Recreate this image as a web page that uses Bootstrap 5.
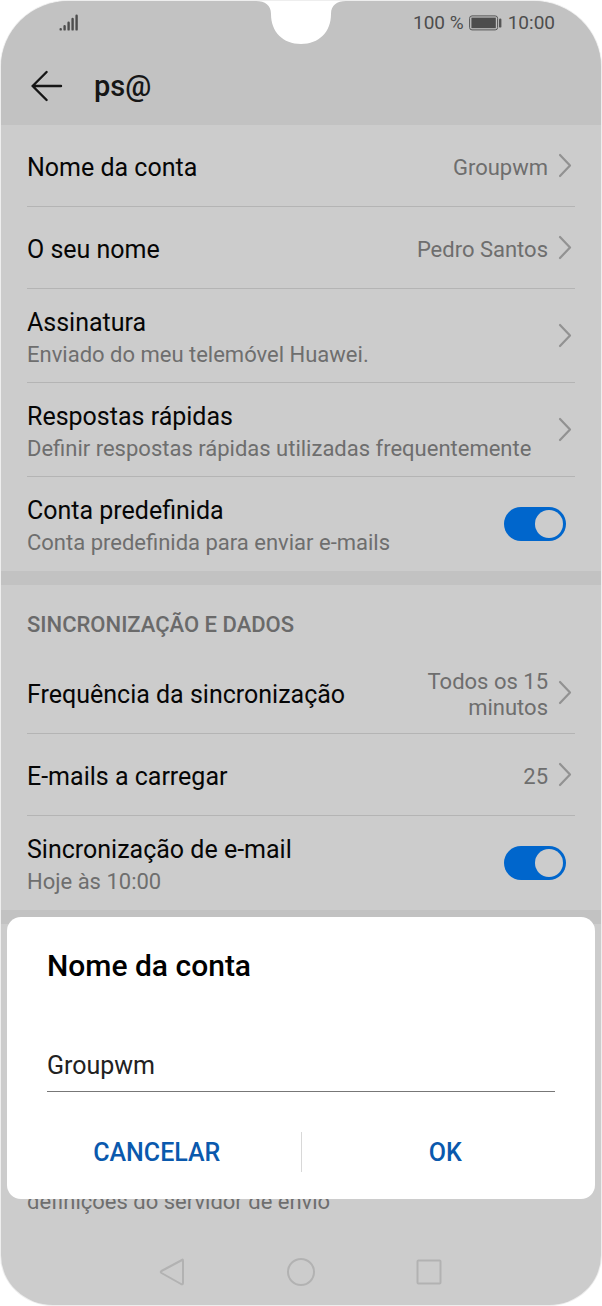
<!DOCTYPE html>
<html lang="pt">
<head>
<meta charset="utf-8">
<meta name="viewport" content="width=device-width, initial-scale=1">
<title>ps@</title>
<link href="https://cdn.jsdelivr.net/npm/bootstrap@5.3.0/dist/css/bootstrap.min.css" rel="stylesheet">
<style>
body { font-family: Roboto, "Liberation Sans", sans-serif; background: #fff; color: #060606; padding: 1px; }
.phone { background: #ccc; border-radius: 68px 68px 52px 52px / 66px 66px 50px 50px; box-shadow: 0 0 0 1px #eee; min-height: calc(100vh - 2px); }
.notch { left: 50%; top: -2px; transform: translateX(-50%); }
.topbar { background: #c2c2c2; color: #161616; }
.status { height: 44px; padding: 0 46px 0 57px; font-size: 19px; line-height: 44px; color: #4d4d4d; }
.heading { height: 80px; padding: 1px 26px 0 29px; }
.heading h1 { font-size: 29px; line-height: 36px; font-weight: 500; padding-left: 6px; }
.settings { padding: 0 26px; }
.entry { min-height: 82px; border-bottom: 1px solid #b4b4b4; color: inherit; text-decoration: none; gap: 9px; padding-right: 2px; }
.entry.tall { min-height: 94px; }
.entry:last-child { border-bottom-color: transparent; }
.entry span.name, .entry .choice, .entry .texts { padding-top: 4px; }
.entry .texts span.name { padding-top: 0; }
.name { font-size: 25px; line-height: 34px; }
.detail, .choice { font-size: 22px; line-height: 30px; color: #6e6e6e; }
.choice { line-height: 26px; text-align: right; max-width: 140px; }
.band { height: 14px; background: #c2c2c2; }
.group-title { font-size: 22px; line-height: 30px; font-weight: 500; color: #6a6a6a; padding: 25px 0 12px; }
.entry .form-check-input { width: 62px; height: 34px; border: 0; margin: 0 7px 0 0; flex-shrink: 0;
  background-color: #06c; background-size: 34px 34px; background-position: right center;
  background-image: url("data:image/svg+xml,%3Csvg xmlns='http://www.w3.org/2000/svg' viewBox='0 0 34 34'%3E%3Ccircle cx='17' cy='17' r='14' fill='%23ccc'/%3E%3C/svg%3E"); }
.footnote { margin-bottom: 22px; }
.sheet { left: 6px; right: 6px; bottom: 106px; border-radius: 14px; padding: 28px 40px 16px; }
.sheet h2 { font-size: 30px; line-height: 42px; font-weight: 500; color: #000; margin-bottom: 58px; }
.sheet .form-control { font-size: 25px; line-height: 34px; height: 47px; padding: 2px 0 8px; border: 0; border-bottom: 1px solid #777; border-radius: 0; color: #222; }
.actions { margin: 30px -34px 0; padding-bottom: 1px; }
.sheet .btn { font-size: 25px; line-height: 34px; font-weight: 500; color: #0a59ad; padding: 14px 0 12px; border: 0; }
.rule { width: 1px; height: 40px; background: #d8d8d8; }
.softkeys { height: 66px; padding: 0 157px 0 156px; }
</style>
</head>
<body>
<div class="phone position-relative overflow-hidden d-flex flex-column">
  <header class="topbar">
    <div class="status d-flex align-items-center justify-content-between">
      <svg width="21" height="19" viewBox="0 0 21 19" fill="none" stroke="#4d4d4d" stroke-width="2.4" stroke-linecap="round" aria-label="Rede"><path d="M2.7 15.1V15.4M6.6 12.2V15.4M10.6 8.7V15.4M14.6 5V15.4M18.6 1.7V15.4"/></svg>
      <div class="d-flex align-items-center">
        <span>100 %</span>
        <svg class="mx-1" width="36" height="16" viewBox="0 0 36 16" aria-label="Bateria"><rect x="1.6" y=".9" width="28" height="14" rx="2.4" fill="#c2c2c2" stroke="#555"/><rect x="3.4" y="2.6" width="24.4" height="10.6" fill="#4d4d4d"/><rect x="31" y="3.6" width="2.4" height="9" rx="1.2" fill="#555"/></svg>
        <span>10:00</span>
      </div>
    </div>
    <div class="heading d-flex align-items-center">
      <a href="#" class="d-flex" aria-label="Voltar"><svg width="34" height="32" viewBox="0 0 34 32" fill="none" stroke="#161616" stroke-width="2.4" stroke-linecap="round" stroke-linejoin="round"><path d="M31 16H2.6M16.6 2L2.6 16L16.6 30"/></svg></a>
      <h1 class="mb-0 ms-4">ps@</h1>
    </div>
  </header>

  <main class="flex-grow-1">
    <section class="settings">
      <a href="#" class="entry d-flex align-items-center"><span class="name me-auto">Nome da conta</span><span class="choice">Groupwm</span><svg width="16" height="26" viewBox="0 0 16 26" fill="none" stroke="#929292" stroke-width="2.2" stroke-linecap="round" stroke-linejoin="round"><path d="M3 2L13 12.5L3 23"/></svg></a>
      <a href="#" class="entry d-flex align-items-center"><span class="name me-auto">O seu nome</span><span class="choice">Pedro Santos</span><svg width="16" height="26" viewBox="0 0 16 26" fill="none" stroke="#929292" stroke-width="2.2" stroke-linecap="round" stroke-linejoin="round"><path d="M3 2L13 12.5L3 23"/></svg></a>
      <a href="#" class="entry tall d-flex align-items-center"><span class="texts me-auto"><span class="name d-block">Assinatura</span><span class="detail d-block">Enviado do meu telemóvel Huawei.</span></span><svg width="16" height="26" viewBox="0 0 16 26" fill="none" stroke="#929292" stroke-width="2.2" stroke-linecap="round" stroke-linejoin="round"><path d="M3 2L13 12.5L3 23"/></svg></a>
      <a href="#" class="entry tall d-flex align-items-center"><span class="texts me-auto"><span class="name d-block">Respostas rápidas</span><span class="detail d-block">Definir respostas rápidas utilizadas frequentemente</span></span><svg width="16" height="26" viewBox="0 0 16 26" fill="none" stroke="#929292" stroke-width="2.2" stroke-linecap="round" stroke-linejoin="round"><path d="M3 2L13 12.5L3 23"/></svg></a>
      <div class="entry tall d-flex align-items-center form-switch ps-0"><label class="texts me-auto" for="padrao"><span class="name d-block">Conta predefinida</span><span class="detail d-block">Conta predefinida para enviar e-mails</span></label><input class="form-check-input" type="checkbox" role="switch" id="padrao" checked></div>
    </section>
    <div class="band"></div>
    <section class="settings">
      <h2 class="group-title mb-0">SINCRONIZAÇÃO E DADOS</h2>
      <a href="#" class="entry d-flex align-items-center"><span class="name me-auto">Frequência da sincronização</span><span class="choice">Todos os 15 minutos</span><svg width="16" height="26" viewBox="0 0 16 26" fill="none" stroke="#929292" stroke-width="2.2" stroke-linecap="round" stroke-linejoin="round"><path d="M3 2L13 12.5L3 23"/></svg></a>
      <a href="#" class="entry d-flex align-items-center"><span class="name me-auto">E-mails a carregar</span><span class="choice">25</span><svg width="16" height="26" viewBox="0 0 16 26" fill="none" stroke="#929292" stroke-width="2.2" stroke-linecap="round" stroke-linejoin="round"><path d="M3 2L13 12.5L3 23"/></svg></a>
      <div class="entry tall d-flex align-items-center form-switch ps-0"><label class="texts me-auto" for="sinc"><span class="name d-block">Sincronização de e-mail</span><span class="detail d-block">Hoje às 10:00</span></label><input class="form-check-input" type="checkbox" role="switch" id="sinc" checked></div>
    </section>
    <div class="band"></div>
  </main>
  <p class="settings detail footnote">definições do servidor de envio</p>

  <nav class="softkeys d-flex justify-content-between align-items-center">
    <a href="#" class="d-flex" aria-label="Voltar"><svg width="30" height="30" viewBox="0 0 30 30" fill="none" stroke="#b2b2b2" stroke-width="2" stroke-linejoin="round"><path d="M25 3Q26 2 26 4V26Q26 28 24 27L4.500 16Q3 15 4.500 14Z"/></svg></a>
    <a href="#" class="d-flex" aria-label="Início"><svg width="30" height="30" viewBox="0 0 30 30" fill="none" stroke="#b2b2b2" stroke-width="2"><circle cx="15" cy="15" r="13"/></svg></a>
    <a href="#" class="d-flex" aria-label="Recentes"><svg width="30" height="30" viewBox="0 0 30 30" fill="none" stroke="#b2b2b2" stroke-width="2"><rect x="3.500" y="3.500" width="23" height="23" rx="1"/></svg></a>
  </nav>

  <form class="sheet position-absolute bg-white" role="dialog" aria-labelledby="conta-titulo">
    <h2 id="conta-titulo"><label for="conta">Nome da conta</label></h2>
    <input class="form-control shadow-none" type="text" id="conta" value="Groupwm">
    <div class="actions d-flex align-items-center">
      <button type="button" class="btn flex-fill w-50">CANCELAR</button>
      <span class="rule"></span>
      <button type="button" class="btn flex-fill w-50">OK</button>
    </div>
  </form>

  <svg class="notch position-absolute" width="90" height="46" viewBox="0 0 90 46" fill="#fff" aria-hidden="true"><path d="M0 0V2C9 2 15 6 15 15C15 33 27 45 45 45S75 33 75 15C75 6 81 2 90 2V0Z"/></svg>
</div>
<script src="https://cdn.jsdelivr.net/npm/bootstrap@5.3.0/dist/js/bootstrap.bundle.min.js"></script>
</body>
</html>
